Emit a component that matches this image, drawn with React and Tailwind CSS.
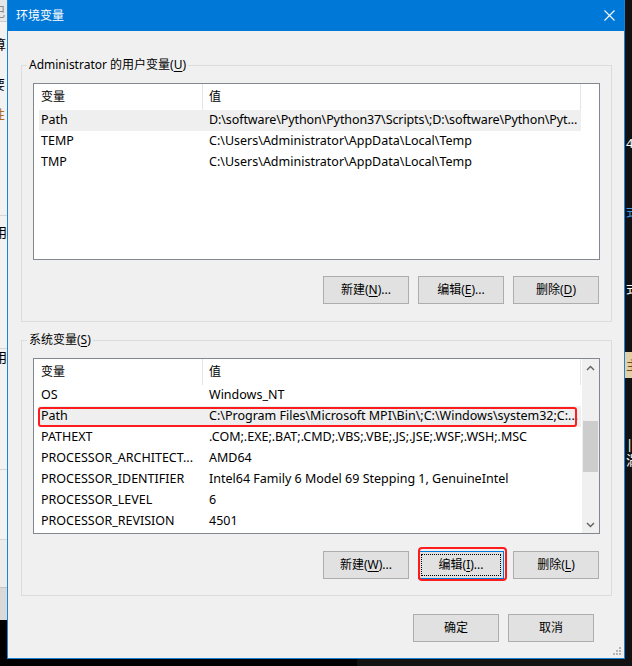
import React from 'react'

const userVars = [
  ['Path', 'D:\\software\\Python\\Python37\\Scripts\\;D:\\software\\Python\\Pyt...', true, false, true],
  ['TEMP', 'C:\\Users\\Administrator\\AppData\\Local\\Temp'],
  ['TMP', 'C:\\Users\\Administrator\\AppData\\Local\\Temp'],
]

const sysVars = [
  ['OS', 'Windows_NT'],
  ['Path', 'C:\\Program Files\\Microsoft MPI\\Bin\\;C:\\Windows\\system32;C:...', true, true],
  ['PATHEXT', '.COM;.EXE;.BAT;.CMD;.VBS;.VBE;.JS;.JSE;.WSF;.WSH;.MSC'],
  ['PROCESSOR_ARCHITECT...', 'AMD64'],
  ['PROCESSOR_IDENTIFIER', 'Intel64 Family 6 Model 69 Stepping 1, GenuineIntel'],
  ['PROCESSOR_LEVEL', '6'],
  ['PROCESSOR_REVISION', '4501'],
]

// Mnemonic letter, underlined like the Win32 dialog.
const K = ({ children }) => <u className="underline-offset-2">{children}</u>

function Btn({ children, focused, marked }) {
  return (
    <div
      className={`relative flex h-[28px] w-[86px] items-center justify-center border bg-[#e1e1e1] text-[12px] text-black ${
        focused ? 'border-[#0078d7]' : 'border-[#adadad]'
      }`}
    >
      {focused && <span className="absolute inset-[2px] border border-dotted border-black" />}
      <span className="relative">{children}</span>
      {marked && (
        <span className="absolute bottom-[-3px] left-[-1px] right-[-4px] top-[-5px] rounded-[4px] border-2 border-[#ff1c1c]" />
      )}
    </div>
  )
}

function Chevron({ up }) {
  return (
    <svg width="9" height="6" viewBox="0 0 9 6">
      <path
        d={up ? 'M1 5 L4.5 1.5 L8 5' : 'M1 1 L4.5 4.5 L8 1'}
        fill="none"
        stroke="#606060"
        strokeWidth="1.4"
      />
    </svg>
  )
}

function Scrollbar() {
  return (
    <div className="ml-px flex w-[17px] flex-col bg-[#f0f0f0]">
      <div className="flex h-[17px] items-center justify-center">
        <Chevron up />
      </div>
      <div className="flex-1 px-px">
        <div className="mt-[45px] h-[51px] bg-[#cdcdcd]" />
      </div>
      <div className="flex h-[17px] items-center justify-center">
        <Chevron />
      </div>
    </div>
  )
}

function VarList({ rows, className, scroll }) {
  return (
    <div className={`flex overflow-hidden border border-[#828790] bg-white text-[12.5px] text-black ${className}`}>
      <div className="min-w-0 flex-1">
        <div className="flex h-[26px] text-[12px]">
          <div className="flex w-[169px] items-center border-r border-[#e5e5e5] pl-[7px]">变量</div>
          <div className="flex w-[378px] items-center border-r border-[#e5e5e5] pl-[6px]">值</div>
        </div>
        {rows.map(([name, value, selected, marked, tight]) => (
          <div
            key={name}
            className={`relative ml-[5px] flex h-[21px] w-[542px] items-center ${selected ? 'bg-[#efefef]' : ''}`}
          >
            <div className="w-[164px] overflow-hidden whitespace-nowrap pl-[2px]">{name}</div>
            <div className={`w-[378px] overflow-hidden whitespace-nowrap pl-[6px] ${tight ? 'tracking-[-0.1px]' : ''}`}>
              {value}
            </div>
            {marked && (
              <span className="absolute bottom-0 left-[-1px] right-[4px] top-[1px] rounded-[3px] border-2 border-[#ff1c1c]" />
            )}
          </div>
        ))}
      </div>
      {scroll && <Scrollbar />}
    </div>
  )
}

function Group({ legend, children, className = '' }) {
  return (
    <fieldset className={`ml-[13px] mr-[12px] border border-[#dcdcdc] px-[11px] pt-[10px] ${className}`}>
      <legend className="ml-[-6px] px-[2px] text-[12px] leading-[16px] text-black">{legend}</legend>
      {children}
    </fieldset>
  )
}

function LeftStrip() {
  return (
    <div className="flex h-full w-[7px] flex-col overflow-hidden text-[13px] leading-[16px] text-black">
      <div className="h-[22px] border-b border-[#cdcdcd] bg-[#e6e6e6] pt-[3px]">
        <span className="ml-[-8px] block text-[#8a8a8a]">记</span>
      </div>
      <div className="h-[194px] border-b border-[#d6d6d6] bg-[#f2f2f2] pt-[14px]">
        <span className="ml-[-7px] block">算</span>
        <span className="ml-[-8px] mt-[24px] block">要</span>
        <span className="ml-[-8px] mt-[14px] block text-[#b06a1c]">性</span>
      </div>
      <div className="h-[133px] border-b border-[#d6d6d6] bg-[#f2f2f2] pt-[8px]">
        <span className="ml-[-6px] block">用</span>
      </div>
      <div className="h-[121px] border-b border-[#d6d6d6] bg-[#f2f2f2] pt-[0px]">
        <span className="ml-[-6px] block">用</span>
      </div>
      <div className="h-[70px] border-b border-[#d6d6d6] bg-[#f2f2f2]" />
      <div className="h-[48px] border-b border-[#c4c4c4] bg-[#ececec]" />
      <div className="h-[32px] bg-[#d9d9d9]" />
      <div className="flex-1 bg-black" />
    </div>
  )
}

function RightStrip() {
  return (
    <div className="flex h-full w-[7px] flex-col overflow-hidden bg-[#121212] text-[13px] leading-[16px] text-white">
      <span className="mt-[135px] block pl-[1px]">4</span>
      <span className="mt-[52px] block pl-[1px] text-[#3d9be9]">式</span>
      <span className="mt-[61px] block pl-[1px]">式</span>
      <div className="mt-[56px] h-[26px] bg-[#e3cfa6] pl-[1px] pt-[5px] text-[#6b4a1a]">主</div>
      <span className="mt-[58px] block pl-[1px]">|涡</span>
    </div>
  )
}

export default function App() {
  return (
    <div className="flex h-[666px] w-[632px] overflow-hidden bg-[#121212] font-['Noto_Sans','Noto_Sans_CJK_SC',sans-serif]">
      <LeftStrip />
      <div className="flex w-[618px] flex-col">
        <div className="relative flex h-[659px] flex-col border-x border-b border-[#1883d7] bg-[#f0f0f0]">
          <div className="flex h-[31px] shrink-0 items-center justify-between bg-[#0078d7] pl-[8px] pr-[9px] text-[12px] text-white">
            <span>环境变量</span>
            <svg width="11" height="11" viewBox="0 0 11 11">
              <path d="M0.5 0.5 L10.5 10.5 M10.5 0.5 L0.5 10.5" stroke="#ffffff" strokeWidth="1.1" />
            </svg>
          </div>

          <Group
            className="mt-[26px] pb-[17px]"
            legend={
              <>
                Administrator 的用户变量(<K>U</K>)
              </>
            }
          >
            <VarList rows={userVars} className="h-[177px]" />
            <div className="mt-[16px] flex justify-end gap-[9px] pr-px">
              <Btn>
                新建(<K>N</K>)...
              </Btn>
              <Btn>
                编辑(<K>E</K>)...
              </Btn>
              <Btn>
                删除(<K>D</K>)
              </Btn>
            </div>
          </Group>

          <Group
            className="mt-[10px] pb-[16px]"
            legend={
              <>
                系统变量(<K>S</K>)
              </>
            }
          >
            <VarList rows={sysVars} className="h-[176px]" scroll />
            <div className="mt-[17px] flex justify-end gap-[9px] pr-px">
              <Btn>
                新建(<K>W</K>)...
              </Btn>
              <Btn focused marked>
                编辑(<K>I</K>)...
              </Btn>
              <Btn>
                删除(<K>L</K>)
              </Btn>
            </div>
          </Group>

          <div className="mr-[30px] mt-[18px] flex justify-end gap-[9px]">
            <Btn>确定</Btn>
            <Btn>取消</Btn>
          </div>

          {/* resize grip */}
          <svg className="absolute bottom-[3px] right-[3px]" width="9" height="9" viewBox="0 0 9 9" fill="#b4b4b4">
            <rect x="7" y="1" width="2" height="2" />
            <rect x="4" y="4" width="2" height="2" />
            <rect x="7" y="4" width="2" height="2" />
            <rect x="1" y="7" width="2" height="2" />
            <rect x="4" y="7" width="2" height="2" />
            <rect x="7" y="7" width="2" height="2" />
          </svg>
        </div>
        <div className="flex flex-1">
          <div className="w-[350px] bg-black" />
        </div>
      </div>
      <RightStrip />
    </div>
  )
}
